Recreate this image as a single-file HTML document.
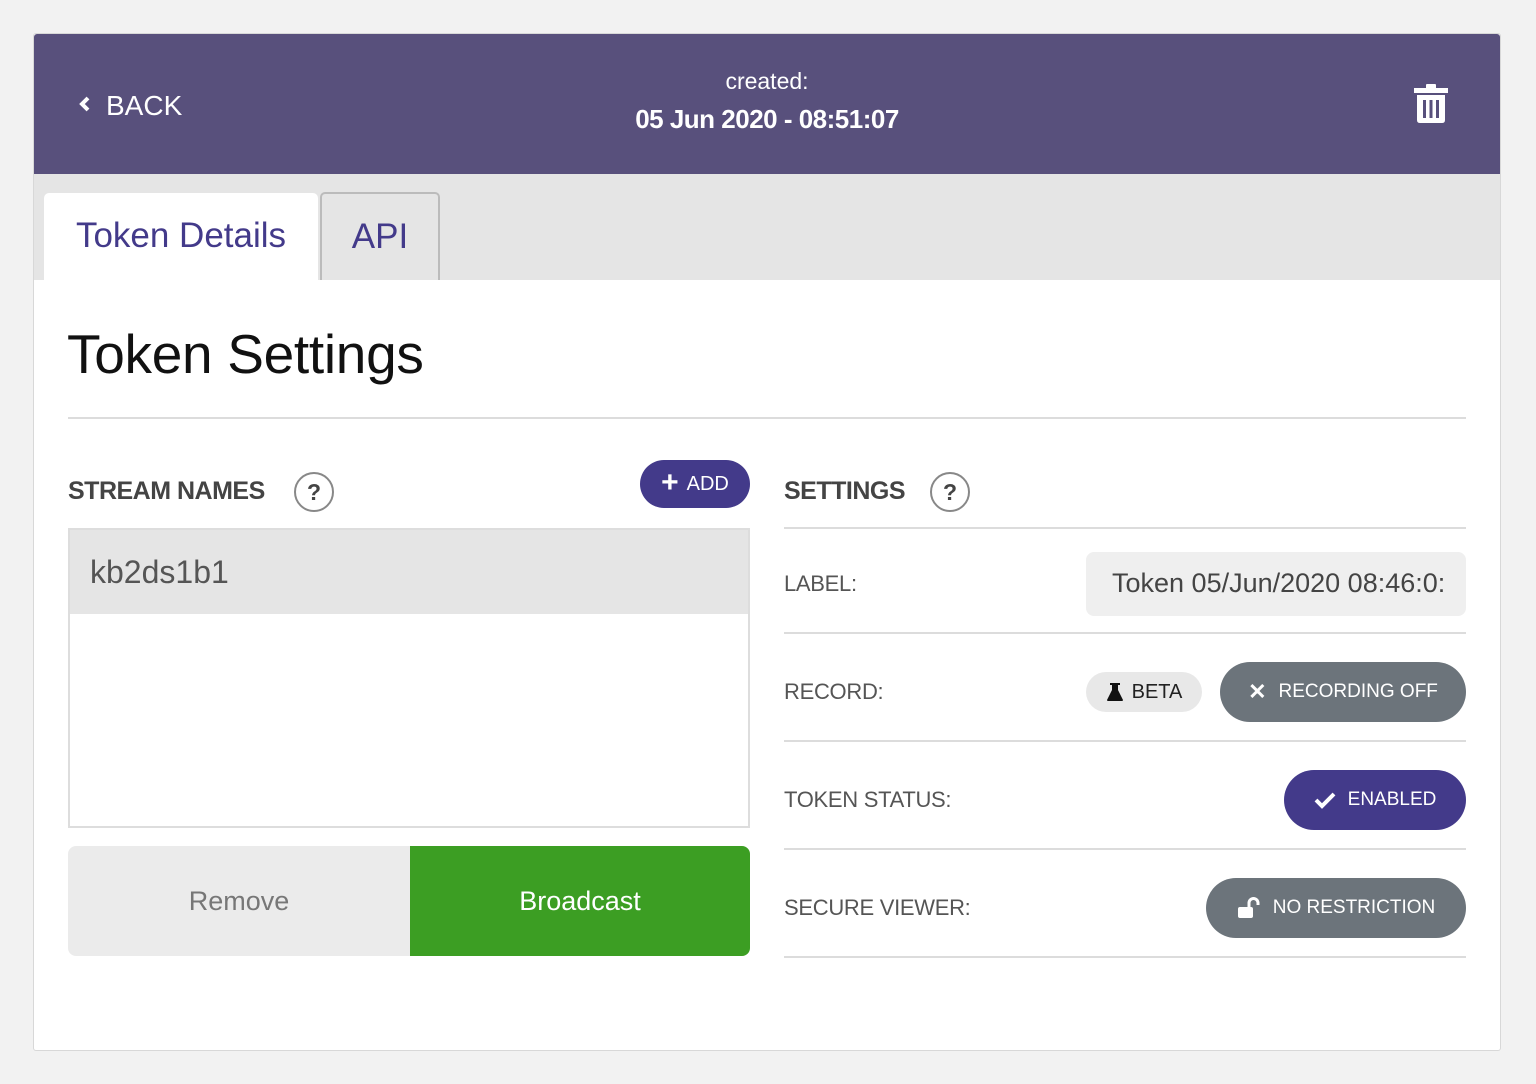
<!DOCTYPE html>
<html><head><meta charset="utf-8"><style>
*{box-sizing:border-box;margin:0;padding:0}
body{width:1536px;height:1084px;background:#f2f2f2;font-family:"Liberation Sans",sans-serif;position:relative;overflow:hidden}
.a{position:absolute}
.card{left:33px;top:33px;width:1468px;height:1018px;background:#fff;border:1px solid #d8d8d8;border-radius:3px;overflow:hidden}
.hdr{left:34px;top:34px;width:1466px;height:140px;background:#58507c;border-radius:3px 3px 0 0}
.tabbar{left:34px;top:174px;width:1466px;height:106px;background:#e5e5e5}
.hr{height:2px;background:#dcdcdc}
.pill{border-radius:30px;color:#fff;font-size:19px;display:flex;align-items:center;justify-content:center;gap:12px}
.lbl{font-size:22px;color:#555;letter-spacing:-0.3px}
.h{font-size:25px;font-weight:bold;color:#444;letter-spacing:-0.5px}
.q{width:40px;height:40px;border:2px solid #888;border-radius:50%;font-weight:bold;font-size:23px;color:#444;text-align:center;line-height:36px}
</style></head><body>
<div class="a card"></div>
<div class="a hdr"></div>
<div class="a" style="left:78px;top:90px;color:#fff;font-size:28px">
<svg width="14" height="18" viewBox="0 0 14 18" style="vertical-align:2px;margin-right:14px"><path d="M10 3 L4 9 L10 15" stroke="#fff" stroke-width="4" fill="none"/></svg>BACK</div>
<div class="a" style="left:534px;width:466px;top:68px;text-align:center;color:#fff;font-size:23px">created:</div>
<div class="a" style="left:534px;width:466px;top:104px;text-align:center;color:#fff;font-size:26px;font-weight:bold;letter-spacing:-0.5px">05 Jun 2020 - 08:51:07</div>
<svg class="a" style="left:1414px;top:84px" width="34" height="40" viewBox="0 0 34 40"><rect x="0" y="4" width="34" height="5" fill="#fff"/><rect x="12" y="0" width="10" height="5" rx="1" fill="#fff"/><path d="M3 11 H31 V36 Q31 39 28 39 H6 Q3 39 3 36 Z" fill="#fff"/><rect x="9" y="16" width="3" height="18" fill="#58507c"/><rect x="15.5" y="16" width="3" height="18" fill="#58507c"/><rect x="22" y="16" width="3" height="18" fill="#58507c"/></svg>
<div class="a tabbar"></div>
<div class="a" style="left:44px;top:193px;width:274px;height:88px;background:#fff;border-radius:5px 5px 0 0;color:#433a8a;font-size:35px;text-align:center;line-height:86px">Token Details</div>
<div class="a" style="left:320px;top:192px;width:120px;height:88px;border:2px solid #bbb;border-bottom:none;border-radius:5px 5px 0 0;color:#433a8a;font-size:35px;text-align:center;line-height:86px">API</div>
<div class="a" style="left:67px;top:322px;font-size:55px;color:#111;letter-spacing:-0.3px">Token Settings</div>
<div class="a hr" style="left:68px;top:417px;width:1398px"></div>
<div class="a h" style="left:68px;top:477px">STREAM NAMES</div>
<div class="a q" style="left:294px;top:472px">?</div>
<div class="a pill" style="left:640px;top:460px;width:110px;height:48px;background:#433a8a;font-size:20px;gap:8px"><span style="font-size:30px;font-weight:bold;margin-top:-3px">+</span>ADD</div>
<div class="a" style="left:68px;top:528px;width:682px;height:300px;border:2px solid #ddd"></div>
<div class="a" style="left:70px;top:530px;width:678px;height:84px;background:#e5e5e5;font-size:32px;color:#555;padding-left:20px;line-height:84px">kb2ds1b1</div>
<div class="a" style="left:68px;top:846px;width:342px;height:110px;background:#ebebeb;border-radius:8px 0 0 8px;color:#777;font-size:27px;text-align:center;line-height:110px">Remove</div>
<div class="a" style="left:410px;top:846px;width:340px;height:110px;background:#3c9e23;border-radius:0 8px 8px 0;color:#fff;font-size:27px;text-align:center;line-height:110px">Broadcast</div>
<div class="a h" style="left:784px;top:477px">SETTINGS</div>
<div class="a q" style="left:930px;top:472px">?</div>
<div class="a hr" style="left:784px;top:527px;width:682px"></div>
<div class="a lbl" style="left:784px;top:571px">LABEL:</div>
<div class="a" style="left:1086px;top:552px;width:380px;height:64px;background:#efefef;border-radius:8px;font-size:27px;color:#444;padding-left:26px;line-height:62px;overflow:hidden;white-space:nowrap">Token 05/Jun/2020 08:46:0:</div>
<div class="a hr" style="left:784px;top:632px;width:682px"></div>
<div class="a lbl" style="left:784px;top:679px">RECORD:</div>
<div class="a pill" style="left:1086px;top:672px;width:116px;height:40px;background:#e8e8e8;color:#222;font-size:20px;gap:8px"><svg width="18" height="20" viewBox="0 0 18 20"><path d="M4 1 H14 V3 H12 V8 L17 18 Q17 19 16 19 H2 Q1 19 1 18 L6 8 V3 H4 Z" fill="#111"/></svg>BETA</div>
<div class="a pill" style="left:1220px;top:662px;width:246px;height:60px;background:#6c747b"><span style="font-weight:bold;font-size:22px">✕</span>RECORDING OFF</div>
<div class="a hr" style="left:784px;top:740px;width:682px"></div>
<div class="a lbl" style="left:784px;top:787px">TOKEN STATUS:</div>
<div class="a pill" style="left:1284px;top:770px;width:182px;height:60px;background:#433a8a"><svg width="22" height="18" viewBox="0 0 22 18"><path d="M2 9 L8 15 L20 3" stroke="#fff" stroke-width="4" fill="none"/></svg>ENABLED</div>
<div class="a hr" style="left:784px;top:848px;width:682px"></div>
<div class="a lbl" style="left:784px;top:895px">SECURE VIEWER:</div>
<div class="a pill" style="left:1206px;top:878px;width:260px;height:60px;background:#6c747b"><svg width="24" height="22" viewBox="0 0 24 22"><rect x="1" y="10" width="15" height="11" rx="2" fill="#fff"/><path d="M12 10 V6 A4.5 4.5 0 0 1 21 6 V8" stroke="#fff" stroke-width="3" fill="none"/></svg>NO RESTRICTION</div>
<div class="a hr" style="left:784px;top:956px;width:682px"></div>
</body></html>
